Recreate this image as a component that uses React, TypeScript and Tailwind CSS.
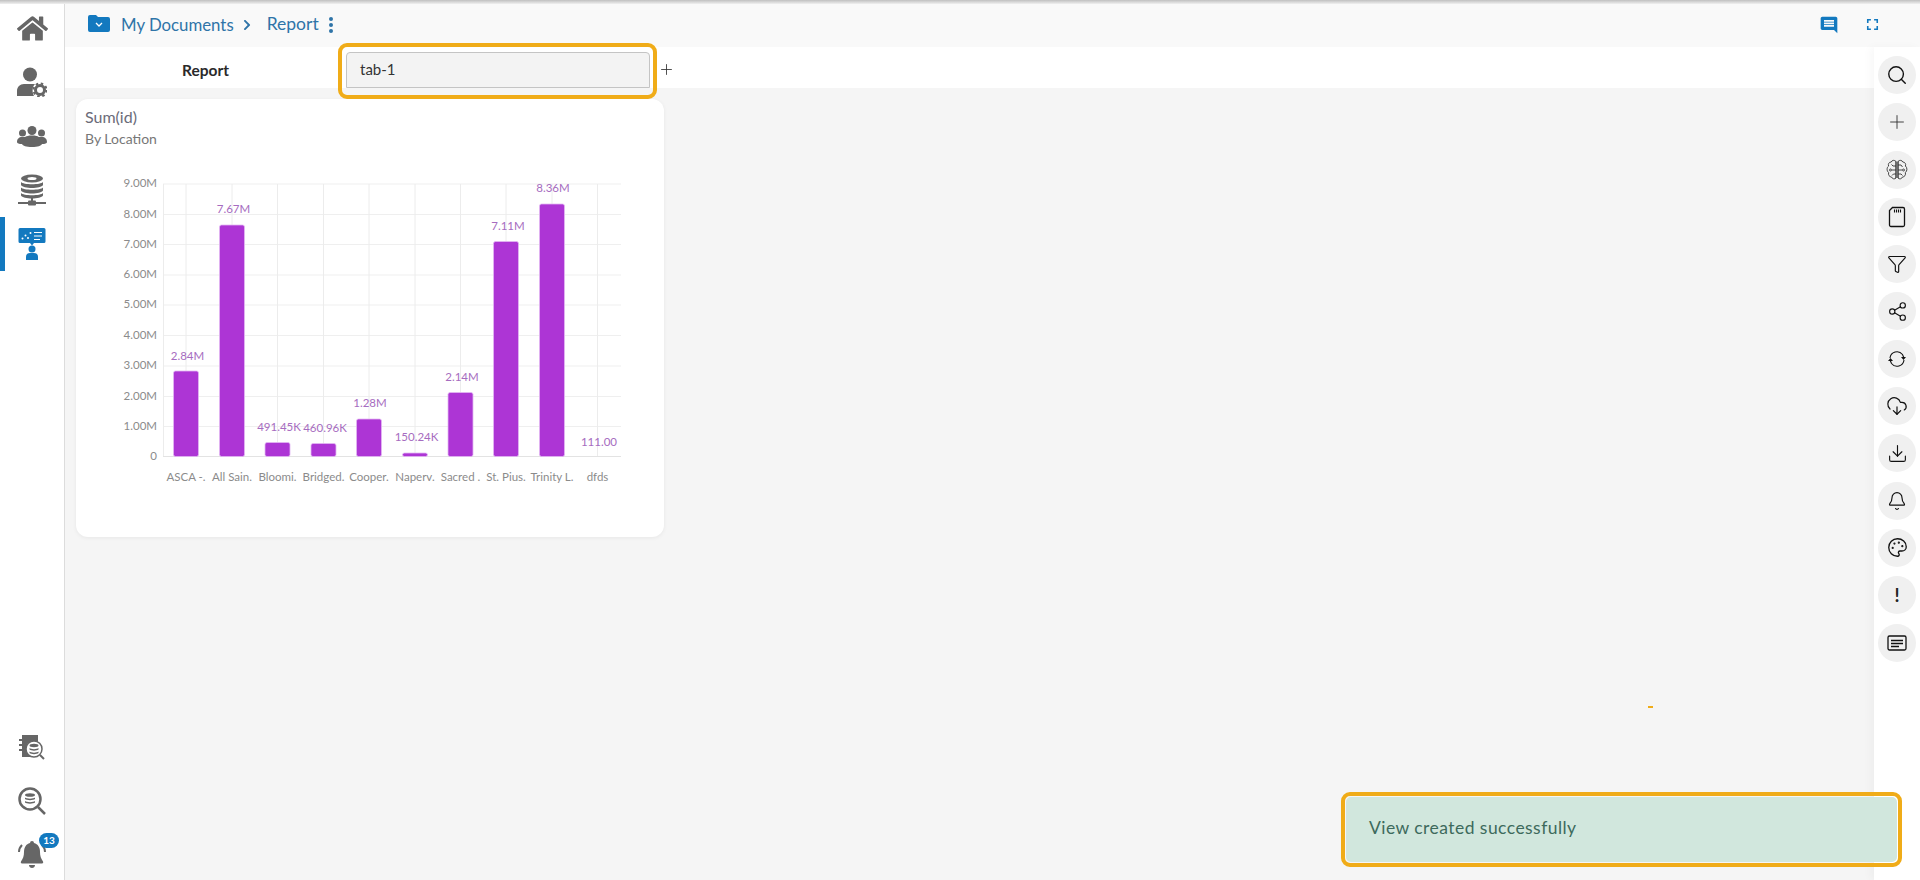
import { Bell, CloudDownload, Download, Funnel, Palette, Plus, Search, Share2 } from 'lucide-react';
import { FaChevronRight, FaHome } from 'react-icons/fa';
import { MdFullscreen, MdMessage } from 'react-icons/md';

const yTicks = [
  { label: '9.00M', y: 184 },
  { label: '8.00M', y: 214.5 },
  { label: '7.00M', y: 244.5 },
  { label: '6.00M', y: 275 },
  { label: '5.00M', y: 305 },
  { label: '4.00M', y: 335.5 },
  { label: '3.00M', y: 366 },
  { label: '2.00M', y: 396.5 },
  { label: '1.00M', y: 426.5 },
  { label: '0', y: 456.5 },
];

const bars = [
  { name: 'ASCA -.', value: '2.84M', x: 186, top: 371, labelY: 356 },
  { name: 'All Sain.', value: '7.67M', x: 232, top: 225, labelY: 209 },
  { name: 'Bloomi.', value: '491.45K', x: 277.5, top: 442.5, labelY: 427, labelX: 279 },
  { name: 'Bridged.', value: '460.96K', x: 323.5, top: 443.5, labelY: 428, labelX: 325 },
  { name: 'Cooper.', value: '1.28M', x: 369, top: 419, labelY: 403, labelX: 370 },
  { name: 'Naperv.', value: '150.24K', x: 415, top: 453, labelY: 437, labelX: 416.5 },
  { name: 'Sacred .', value: '2.14M', x: 460.5, top: 392.5, labelY: 377, labelX: 462 },
  { name: 'St. Pius.', value: '7.11M', x: 506, top: 241.5, labelY: 226, labelX: 508 },
  { name: 'Trinity L.', value: '8.36M', x: 552, top: 204, labelY: 188, labelX: 553 },
  { name: 'dfds', value: '111.00', x: 597.5, top: 456.5, labelY: 442, labelX: 599 },
];

function UserGearIcon() {
  return (
    <svg width="30" height="30" viewBox="0 0 30 30" fill="#666">
      <circle cx="13" cy="7.500" r="7" />
      <path d="M0 29v-5c0-4 3-7 7-7h11c-3 3-3 8-1 12z" />
      <circle cx="23" cy="23" r="4.500" fill="none" stroke="#666" strokeWidth="3" />
      <circle cx="23" cy="23" r="6.500" fill="none" stroke="#666" strokeWidth="2" strokeDasharray="2.500 2.600" />
    </svg>
  );
}

function UsersIcon() {
  return (
    <svg width="30" height="21" viewBox="0 0 30 21" fill="#666">
      <circle cx="15" cy="4.500" r="4.500" />
      <circle cx="5.500" cy="7" r="3.500" />
      <circle cx="24.500" cy="7" r="3.500" />
      <path d="M0 16c0-3 2-5 5-5h3c2-1 3-1.500 7-1.500s5 .5 7 1.500h3c3 0 5 2 5 5 0 1.500-2 2-5 2-1 2-4 3-10 3s-9-1-10-3c-3 0-5-.5-5-2z" />
    </svg>
  );
}

function DbNetworkIcon() {
  return (
    <svg width="30" height="32" viewBox="0 0 30 32" fill="#666">
      <ellipse cx="15" cy="4.500" rx="11" ry="4" />
      <ellipse cx="15" cy="4.500" rx="4.500" ry="1.500" fill="#fff" />
      <path d="M4 8c2 3 20 3 22 0v3c-2 4-20 4-22 0zM4 13.500c2 3 20 3 22 0v3c-2 4-20 4-22 0zM4 19c2 3 20 3 22 0v2.500c-2 4-20 4-22 0z" />
      <rect x="14" y="24" width="2" height="3" />
      <rect x="11" y="26.500" width="8" height="5" rx="1" />
      <rect x="1" y="28" width="28" height="2" />
    </svg>
  );
}

function ReportPersonIcon() {
  return (
    <svg width="28" height="32" viewBox="0 0 28 32" fill="#1379bf">
      <path d="M2 0h24a1.500 1.500 0 011.500 1.500v12a1.500 1.500 0 01-1.500 1.500h-10l-2 2.500-2-2.500H2a1.500 1.500 0 01-1.500-1.500v-12A1.500 1.500 0 012 0z" />
      <g fill="#fff">
        <circle cx="4.500" cy="10.500" r="1" />
        <circle cx="7.500" cy="7.500" r="1" />
        <circle cx="10" cy="10" r="1" />
        <circle cx="12.500" cy="5" r="1" />
      </g>
      <path d="M16 4.500h8M16 8h8M16 11.500h6" stroke="#fff" strokeWidth="1.200" fill="none" />
      <circle cx="14" cy="21" r="3.500" />
      <path d="M8 32v-3a4 4 0 014-4h4a4 4 0 014 4v3z" />
    </svg>
  );
}

function NotebookDbIcon() {
  return (
    <svg width="26" height="27" viewBox="0 0 26 27" fill="none">
      <path d="M3 1h16v7a8 8 0 00-6 15H3z" fill="#666" />
      <path d="M0 6h5M0 11h5M0 16h5" stroke="#666" strokeWidth="2" />
      <circle cx="15" cy="15" r="8" stroke="#666" strokeWidth="1.500" fill="#fff" />
      <ellipse cx="15" cy="11.500" rx="4.500" ry="1.700" fill="#666" />
      <path d="M10.500 14c1.500 1.500 7.500 1.500 9 0v1.500c-1.500 1.500-7.500 1.500-9 0zM10.500 17.500c1.500 1.500 7.500 1.500 9 0V19c-1.500 1.500-7.500 1.500-9 0z" fill="#666" />
      <path d="M21 21l4 4" stroke="#666" strokeWidth="2" />
    </svg>
  );
}

function SearchDbIcon() {
  return (
    <svg width="28" height="28" viewBox="0 0 28 28" fill="none">
      <circle cx="12" cy="12" r="10.500" stroke="#666" strokeWidth="2.500" />
      <ellipse cx="12" cy="8" rx="5" ry="1.800" fill="#666" />
      <path d="M7 10.500c1.500 1.500 8.500 1.500 10 0V12c-1.500 1.500-8.500 1.500-10 0zM7 14c1.500 1.500 8.500 1.500 10 0v1.500c-1.500 1.500-8.500 1.500-10 0z" fill="#666" />
      <path d="M20 20l7 7" stroke="#666" strokeWidth="2.500" />
    </svg>
  );
}

function RingingBellIcon() {
  return (
    <svg width="28" height="27" viewBox="0 0 28 27" fill="#666">
      <path d="M14 0a2 2 0 012 2c4 1 6 4.500 6 9 0 4 1 6.500 3 9.500.500 1 0 2-1 2H4c-1 0-1.500-1-1-2 2-3 3-5.500 3-9.500 0-4.500 2-8 6-9a2 2 0 012-2z" />
      <path d="M11 24h6c0 2-1.500 3-3 3s-3-1-3-3z" />
      <path d="M1 11c0-3 1-5 3-7M27 11c0-3-1-5-3-7" fill="none" stroke="#666" strokeWidth="2" />
    </svg>
  );
}

function BrainIcon() {
  return (
    <svg width="22" height="22" viewBox="0 0 22 22" fill="none" stroke="#333" strokeWidth="0.900">
      <path d="M10 2.500C8.500.8 6 1 5.200 3 3 3 1.800 5 2.600 7 .6 8.500.6 12 2.600 13.500 2 16 3.500 18 5.500 18c.7 2 3.300 2.500 4.500 1z" />
      <path d="M12 2.500C13.500.8 16 1 16.800 3 19 3 20.200 5 19.400 7c2 1.500 2 5 0 6.500.6 2.500-.9 4.500-2.900 4.500-.7 2-3.300 2.500-4.500 1z" />
      <path d="M10 2.500V19M12 2.500V19" />
      <path d="M10 7H7L5.500 5.500M10 11H6M10 15H7.500L6 16.500M12 6h3l1.500 2M12 11h4M12 15h3l1.500 1.500" />
      <circle cx="4.500" cy="11" r="1" />
      <circle cx="17.500" cy="11" r="1" />
    </svg>
  );
}

function SdCardIcon() {
  return (
    <svg width="20" height="22" viewBox="0 0 20 22" fill="none" stroke="#111" strokeWidth="1.300">
      <path d="M5.500 1.500H16a1.500 1.500 0 011.500 1.500v16a1.500 1.500 0 01-1.500 1.500H4A1.500 1.500 0 012.500 19V4.500z" />
      <path d="M7.500 3.500v3M9.500 3.500v3M11.500 3.500v3M13.500 3.500v3" strokeWidth="1.100" />
    </svg>
  );
}

function SyncIcon() {
  return (
    <svg width="20" height="20" viewBox="0 0 20 20" fill="none" stroke="#111" strokeWidth="1.100">
      <path d="M3 9a7 7 0 0112.500-3.500L17 9" />
      <path d="M17 11a7 7 0 01-12.500 3.500L3 11" />
      <path d="M14 8h5l-2.500 3zM1 12h5L3.500 9z" fill="#111" stroke="none" />
    </svg>
  );
}

function MessageBoxIcon() {
  return (
    <svg width="20" height="18" viewBox="0 0 20 18" fill="none" stroke="#111">
      <rect x="1" y="2" width="18" height="14" rx="1.500" strokeWidth="1.300" />
      <path d="M4 6.500h12M4 9.500h12M4 12.500h8" strokeWidth="1.500" />
    </svg>
  );
}

const sideTools = [
  <Search size={22} strokeWidth={1.5} color="#111" />,
  <Plus size={22} strokeWidth={1} color="#333" />,
  <BrainIcon />,
  <SdCardIcon />,
  <Funnel size={20} strokeWidth={1.4} color="#111" />,
  <Share2 size={21} strokeWidth={1.3} color="#111" />,
  <SyncIcon />,
  <CloudDownload size={22} strokeWidth={1.3} color="#111" />,
  <Download size={21} strokeWidth={1.3} color="#111" />,
  <Bell size={20} strokeWidth={1.4} color="#111" />,
  <Palette size={21} strokeWidth={1.5} color="#111" />,
  <span className="text-[18px] leading-none font-bold text-[#222]">!</span>,
  <MessageBoxIcon />,
];

function Chart() {
  return (
    <svg width="588" height="387" viewBox="76 150 588 387" className="block">
      {yTicks.map((t) => (
        <g key={t.label}>
          <line x1="163" x2="621" y1={t.y} y2={t.y} stroke={t.label === '0' ? '#e3e3e3' : '#efefef'} />
          <text x="157" y={t.y + 3} textAnchor="end" fontSize="11.500" fill="#8b8b8b">
            {t.label}
          </text>
        </g>
      ))}
      <line x1="163.500" x2="163.500" y1="184" y2="456" stroke="#ececec" />
      {bars.map((b) => (
        <line key={b.name} x1={b.x} x2={b.x} y1="184" y2="456" stroke="#ececec" />
      ))}
      {bars.map((b) => (
        <g key={b.value}>
          {b.top < 456 && (
            <rect
              x={b.x - 12.5}
              y={b.top}
              width="25"
              height={456.5 - b.top}
              rx="2"
              fill="#ad35d5"
              stroke="#e2b8f2"
              strokeWidth="0.800"
            />
          )}
          <text x={b.labelX ?? b.x + 1.5} y={b.labelY + 4} textAnchor="middle" fontSize="11.500" fill="#a66cc0">
            {b.value}
          </text>
          <text x={b.x} y="481" textAnchor="middle" fontSize="11.500" fill="#8b8b8b">
            {b.name}
          </text>
        </g>
      ))}
    </svg>
  );
}

export default function App() {
  return (
    <div className="relative flex h-[880px] w-[1920px] overflow-hidden bg-white font-['Lato','Noto_Sans',sans-serif]">
      <div className="absolute inset-x-0 top-0 z-20 h-[4px] bg-gradient-to-b from-[#c0c0c0] to-[#f0f0f0]" />

      <aside className="flex w-[65px] shrink-0 flex-col items-center border-r border-[#dcdcdc] bg-white pt-[1px]">
        <div className="flex h-[54px] items-center justify-center">
          <FaHome size={31} color="#666" />
        </div>
        <div className="flex h-[54px] items-center justify-center">
          <UserGearIcon />
        </div>
        <div className="flex h-[54px] items-center justify-center">
          <UsersIcon />
        </div>
        <div className="flex h-[54px] items-center justify-center">
          <DbNetworkIcon />
        </div>
        <div className="relative flex h-[54px] w-full items-center justify-center">
          <div className="absolute inset-y-0 left-0 w-[5px] bg-[#1379bf]" />
          <ReportPersonIcon />
        </div>
        <div className="mt-auto flex h-[54px] items-center justify-center">
          <NotebookDbIcon />
        </div>
        <div className="flex h-[54px] items-center justify-center">
          <SearchDbIcon />
        </div>
        <div className="relative flex h-[52px] w-full items-center justify-center">
          <RingingBellIcon />
          <span className="absolute left-[39px] top-[5px] flex h-[15px] w-[20px] items-center justify-center rounded-full bg-[#1379bf] text-[10px] font-bold text-white">
            13
          </span>
        </div>
      </aside>

      <div className="flex min-w-0 flex-1 flex-col">
        <header className="flex h-[47px] shrink-0 items-center bg-[#f9f9f9] pl-[23px] pr-[38px] pt-[2px]">
          <svg width="22" height="17" viewBox="0 0 22 17" className="mb-[3px] mr-[11px]">
            <path d="M2 0h6l2 2h10a2 2 0 012 2v11a2 2 0 01-2 2H2a2 2 0 01-2-2V2a2 2 0 012-2z" fill="#1379bf" />
            <path d="M8 8l3 3 3-3" stroke="#fff" strokeWidth="1.300" fill="none" />
          </svg>
          <span className="text-[16.800px] text-[#2f74a8]">My Documents</span>
          <FaChevronRight size={12} color="#2f74a8" className="ml-[7px]" />
          <span className="ml-[14px] text-[17.500px] text-[#2f74a8]">Report</span>
          <span className="ml-[10px] flex flex-col gap-[2px]">
            <span className="h-[4px] w-[4px] rounded-full bg-[#2f74a8]" />
            <span className="h-[4px] w-[4px] rounded-full bg-[#2f74a8]" />
            <span className="h-[4px] w-[4px] rounded-full bg-[#2f74a8]" />
          </span>
          <MdMessage size={20} color="#1379bf" className="ml-auto -scale-x-100" />
          <MdFullscreen size={19} color="#1379bf" className="ml-[24px]" />
        </header>

        <div className="flex min-h-0 flex-1">
          <div className="flex min-w-0 flex-1 flex-col bg-[#f5f5f5]">
            <div className="flex h-[41px] shrink-0 items-end bg-white">
              <div className="flex h-[41px] w-[281px] items-center justify-center pt-[6px] text-[15.500px] font-bold text-[#2a2a2a]">
                Report
              </div>
              <div className="relative">
                <div className="flex h-[36px] w-[304px] items-center rounded-t-[4px] border border-[#c4c4c4] bg-[#f3f3f3] pb-[2px] pl-[13px] text-[15px] text-[#333]">
                  tab-1
                </div>
                <div className="absolute -bottom-[11px] -left-[8px] -right-[7px] -top-[9px] z-10 rounded-[9px] border-4 border-[#f0ac18]" />
              </div>
              <Plus size={17} strokeWidth={1.2} color="#333" className="mb-[10px] ml-[8px]" />
            </div>

            <div className="pl-[11px] pt-[11px]">
              <div className="h-[438px] w-[588px] overflow-hidden rounded-xl bg-white shadow-[0_1px_4px_rgba(0,0,0,0.06)]">
                <div className="h-[51px] pl-[9px] pt-[8px]">
                  <div className="text-[16px] leading-[20px] text-[#6b6b78]">Sum(id)</div>
                  <div className="mt-[2px] text-[14px] leading-[20px] text-[#777]">By Location</div>
                </div>
                <Chart />
              </div>
            </div>
          </div>

          <aside className="flex w-[46px] shrink-0 flex-col items-center gap-[9.300px] bg-white pt-[9px] shadow-[-4px_0_8px_rgba(0,0,0,0.03)]">
            {sideTools.map((icon, i) => (
              <div key={i} className="flex h-[38px] w-[38px] items-center justify-center rounded-full bg-[#f0f0f0]">
                {icon}
              </div>
            ))}
          </aside>
        </div>
      </div>

      <div className="absolute left-[1648px] top-[706px] h-[2px] w-[5px] bg-[#f0ac18]" />

      <div className="absolute bottom-[13px] right-[18px] z-10 h-[75px] w-[561px] rounded-[9px] border-4 border-[#f0ac18] p-px">
        <div className="flex h-full items-center rounded-[5px] bg-[#d1e7dd] pb-[3px] pl-[23px] text-[17.500px] tracking-[0.45px] text-[#3d6a5c]">
          View created successfully
        </div>
      </div>
    </div>
  );
}
